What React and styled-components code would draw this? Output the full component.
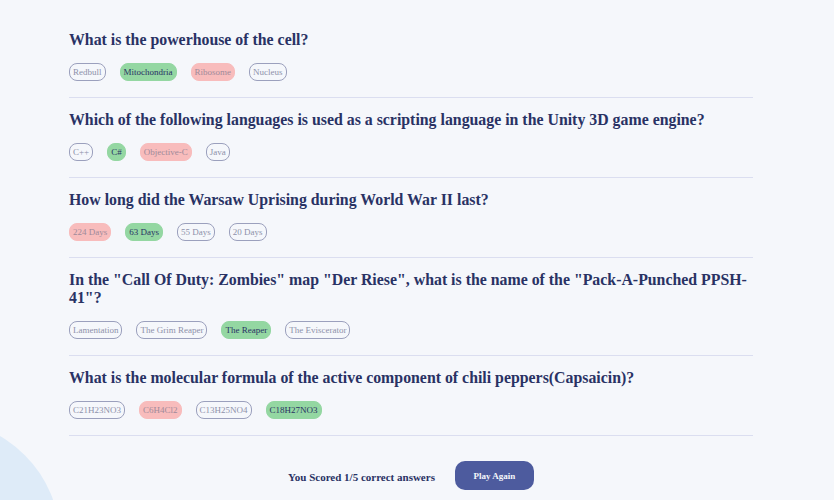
import React from 'react';
import styled, { createGlobalStyle } from 'styled-components';

const GlobalStyle = createGlobalStyle`
  html, body {
    margin: 0;
    padding: 0;
    background: #F5F7FB;
  }
  body {
    font-family: "Liberation Serif", "Times New Roman", serif;
    overflow: hidden;
  }
`;

const Page = styled.main`
  position: relative;
  min-height: 500px;
  overflow: hidden;
`;

const Blob = styled.div`
  position: absolute;
  left: -180px;
  top: 420px;
  width: 240px;
  height: 240px;
  border-radius: 50%;
  background: #DEEBF8;
  z-index: 0;
`;

const Container = styled.div`
  position: relative;
  z-index: 1;
  width: 684px;
  margin-left: 69px;
  padding-top: 18px;
`;

const Section = styled.section`
  padding: 13px 0 16px;
  border-bottom: 1px solid #DBDEF0;
`;

const Question = styled.h2`
  margin: 0 0 14px;
  font-size: 15.85px;
  line-height: 18px;
  font-weight: 700;
  color: #293264;
`;

const Answers = styled.div`
  display: flex;
  gap: 14px;
`;

const colors = {
  correct: { bg: '#94D7A2', border: '#94D7A2', text: '#293264' },
  wrong: { bg: '#F8BCBC', border: '#F8BCBC', text: '#9f8a9a' },
  idle: { bg: 'transparent', border: '#9ba0bd', text: '#8d91aa' },
};

const Pill = styled.span`
  display: inline-flex;
  align-items: center;
  height: 18px;
  box-sizing: border-box;
  padding: 0 3px;
  border-radius: 8px;
  font-size: 9px;
  background: ${p => colors[p.$state].bg};
  border: 1px solid ${p => colors[p.$state].border};
  color: ${p => colors[p.$state].text};
`;

const Footer = styled.div`
  display: flex;
  justify-content: center;
  align-items: center;
  gap: 20px;
  margin-top: 25px;
`;

const Score = styled.p`
  margin: 3px 0 0;
  font-size: 11px;
  font-weight: 700;
  color: #293264;
`;

const Button = styled.button`
  width: 79px;
  height: 29px;
  border: none;
  border-radius: 10px;
  background: #4D5B9E;
  color: #F5F7FB;
  font-family: "Liberation Serif", "Times New Roman", serif;
  font-size: 9px;
  font-weight: 700;
`;

const quiz = [
  {
    q: 'What is the powerhouse of the cell?',
    a: [['Redbull', 'idle'], ['Mitochondria', 'correct'], ['Ribosome', 'wrong'], ['Nucleus', 'idle']],
  },
  {
    q: 'Which of the following languages is used as a scripting language in the Unity 3D game engine?',
    a: [['C++', 'idle'], ['C#', 'correct'], ['Objective-C', 'wrong'], ['Java', 'idle']],
  },
  {
    q: 'How long did the Warsaw Uprising during World War II last?',
    a: [['224 Days', 'wrong'], ['63 Days', 'correct'], ['55 Days', 'idle'], ['20 Days', 'idle']],
  },
  {
    q: 'In the "Call Of Duty: Zombies" map "Der Riese", what is the name of the "Pack-A-Punched PPSH-41"?',
    a: [['Lamentation', 'idle'], ['The Grim Reaper', 'idle'], ['The Reaper', 'correct'], ['The Eviscerator', 'idle']],
  },
  {
    q: 'What is the molecular formula of the active component of chili peppers(Capsaicin)?',
    a: [['C21H23NO3', 'idle'], ['C6H4Cl2', 'wrong'], ['C13H25NO4', 'idle'], ['C18H27NO3', 'correct']],
  },
];

export default function App() {
  return (
    <Page>
      <GlobalStyle />
      <Blob />
      <Container>
        {quiz.map(item => (
          <Section key={item.q}>
            <Question>{item.q}</Question>
            <Answers>
              {item.a.map(([text, state]) => (
                <Pill key={text} $state={state}>{text}</Pill>
              ))}
            </Answers>
          </Section>
        ))}
        <Footer>
          <Score>You Scored 1/5 correct answers</Score>
          <Button>Play Again</Button>
        </Footer>
      </Container>
    </Page>
  );
}
